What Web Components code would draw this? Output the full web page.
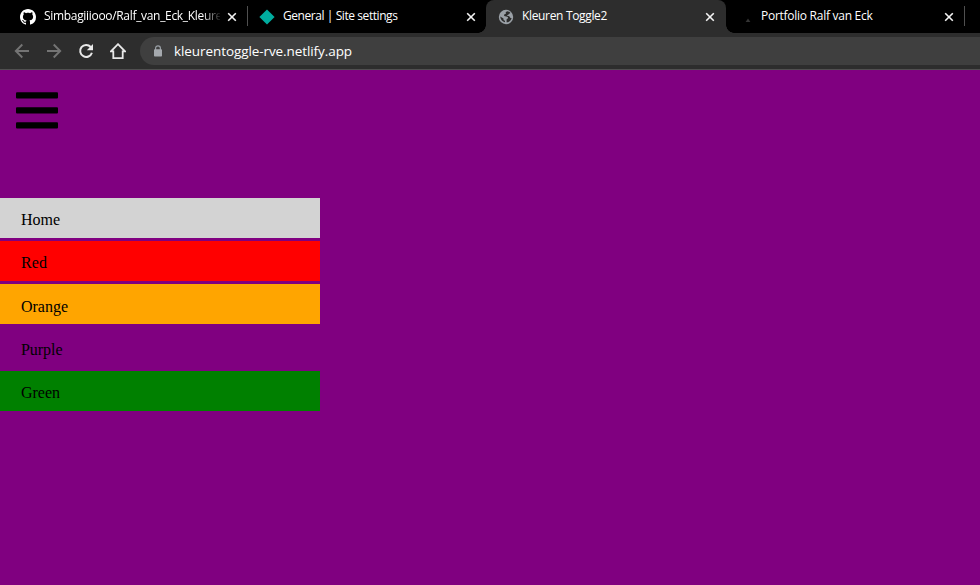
<!DOCTYPE html>
<html lang="nl"><head><meta charset="utf-8"><title>Kleuren Toggle2</title>
<style>html,body{margin:0;height:100%;overflow:hidden;background:purple}</style></head><body>
<browser-window></browser-window>
<script>
const define=(name,html,setup)=>customElements.define(name,class extends HTMLElement{
  constructor(){super();this.attachShadow({mode:'open'}).innerHTML=html}
  connectedCallback(){if(setup)setup(this,this.shadowRoot)}
});

// Text whose tracking is adjusted to fill a given advance width.
define('fit-text',`<style>:host{display:block;white-space:pre;overflow:visible}span{display:inline-block}</style><span><slot></slot></span>`,(el,root)=>{
  const s=root.querySelector('span'),target=+el.getAttribute('w');
  s.style.letterSpacing=((target-s.getBoundingClientRect().width)/el.textContent.length)+'px';
});

const icons={
  github:`<svg width="16" height="16" viewBox="0 0 16 16"><path fill="#fff" d="M8 0C3.58 0 0 3.58 0 8c0 3.54 2.29 6.53 5.47 7.59.4.07.55-.17.55-.38 0-.19-.01-.82-.01-1.49-2.01.37-2.53-.49-2.69-.94-.09-.23-.48-.94-.82-1.13-.28-.15-.68-.52-.01-.53.63-.01 1.08.58 1.23.82.72 1.21 1.87.87 2.33.66.07-.52.28-.87.51-1.07-1.78-.2-3.64-.89-3.64-3.95 0-.87.31-1.59.82-2.15-.08-.2-.36-1.02.08-2.12 0 0 .67-.21 2.2.82.64-.18 1.32-.27 2-.27s1.36.09 2 .27c1.53-1.04 2.2-.82 2.2-.82.44 1.1.16 1.92.08 2.12.51.56.82 1.27.82 2.15 0 3.07-1.87 3.75-3.65 3.95.29.25.54.73.54 1.48 0 1.07-.01 1.93-.01 2.2 0 .21.15.46.55.38A8.01 8.01 0 0 0 16 8c0-4.42-3.58-8-8-8z"/></svg>`,
  netlify:`<svg width="16" height="16" viewBox="0 0 16 16"><path fill="#00ad9f" d="M8 .4 15.6 8 8 15.6.4 8z"/></svg>`,
  globe:`<svg width="16" height="16" viewBox="0 0 16 16"><circle cx="8" cy="8" r="7.2" fill="#9aa0a6"/><path d="M9.5 2.2C7.8 2.6 7.3 3.7 8 4.7c-1.6.1-2.2 1-1.8 2.2 1.1.7 2.9.2 3.7 1.4.5 1-.4 1.6-1.3 2v2.9c2.6 0 4.7-2 5-4.3-1.3.2-1.7-.6-2.1-1.5-.8-.7-2.1-.1-2.6-.8.1-.8 1.5-.6 1.8-1.4.4-.8 1.5-.6 1.6-1.4-.6-.8-1.6-1.4-2.8-1.6zM2.2 7.6c.2 2.8 2 5 4.8 5.7v-1.6c-1.3-.1-1.6-.8-1.5-2.1z" fill="#2d2d2d"/></svg>`,
  peak:`<svg width="16" height="16" viewBox="0 0 16 16"><path d="m8.6 13 2.4-3.5 2.4 3.5z" fill="#343434"/></svg>`,
  lock:`<svg width="10" height="13" viewBox="0 0 10 13"><path d="M2.6 5V3.2a2.4 2.4 0 0 1 4.8 0V5" fill="none" stroke="#9aa0a6" stroke-width="1.2"/><rect x="1" y="4.3" width="8" height="7.2" rx=".8" fill="#a5a9ae"/></svg>`,
  back:`<svg width="16" height="16" viewBox="0 0 16 16"><path d="M15 8H2.2M8.3 1.5 1.8 8l6.5 6.5" fill="none" stroke="#747474" stroke-width="1.9"/></svg>`,
  forward:`<svg width="16" height="16" viewBox="0 0 16 16"><path d="M1 8h12.8M7.7 1.5 14.2 8l-6.5 6.5" fill="none" stroke="#747474" stroke-width="1.9"/></svg>`,
  reload:`<svg width="16" height="16" viewBox="0 0 16 16"><path d="M12.7 4A6 6 0 1 0 13.9 9.7" fill="none" stroke="#e8e8e8" stroke-width="2"/><path d="M15 1v6.2H8.8z" fill="#e8e8e8"/></svg>`,
  home:`<svg width="16" height="16" viewBox="0 0 16 16"><path d="M3.3 15.1V8.3H1L8 1.2l7 7.1h-2.3v6.8z" fill="none" stroke="#e8e8e8" stroke-width="1.8"/></svg>`
};
define('ui-icon',`<style>:host{display:grid;place-items:center;flex:none}svg{display:block}</style><div></div>`,(el,root)=>{root.querySelector('div').innerHTML=icons[el.getAttribute('name')]});

define('browser-tab',`<style>
:host{box-sizing:border-box;display:flex;align-items:center;width:239px;height:33px;padding:0 4px 0 12px;flex:none;position:relative;color:#fff;font:12px "Open Sans","Noto Sans",sans-serif}
:host([active]){background:#2d2d2d;border-radius:8px 8px 0 0;width:240px;padding-right:5px;margin-right:-1px}
:host([active])::before,:host([active])::after{content:"";position:absolute;bottom:0;width:8px;height:8px;left:-8px;background:radial-gradient(circle at 0 0,transparent 7.5px,#2d2d2d 8px)}
:host([active])::after{left:auto;right:-8px;background:radial-gradient(circle at 100% 0,transparent 7.5px,#2d2d2d 8px)}
:host([divider])::after{content:"";position:absolute;right:-1px;top:6px;width:1px;height:20px;background:#505050}
.title{margin:0 0 1px 8px;width:176px;overflow:hidden;line-height:18px;flex:none}
:host([fade]) .title{-webkit-mask-image:linear-gradient(90deg,#000 158px,transparent 178px)}
.close{flex:1;display:grid;place-items:center}svg{display:block}
</style><slot name="icon"></slot><div class="title"><slot></slot></div><div class="close"><svg width="10" height="10" viewBox="0 0 10 10"><path d="m1.2 1.2 7.6 7.6m0-7.6L1.2 8.8" stroke="#f4f4f4" stroke-width="1.6"/></svg></div>`);

define('tool-bar',`<style>
:host{box-sizing:border-box;display:flex;align-items:center;height:37px;background:#2d2d2d;border-bottom:1px solid #505050;padding-left:14px;gap:16px}
.address{height:28px;flex:1;background:#3f3f3f;border-radius:14px 0 0 14px;margin-left:-2px;padding-left:13px;display:flex;align-items:center;gap:11px;color:#fff;font:13.5px "Open Sans","Noto Sans",sans-serif}
</style><ui-icon name="back"></ui-icon><ui-icon name="forward"></ui-icon><ui-icon name="reload"></ui-icon><ui-icon name="home"></ui-icon><div class="address"><ui-icon name="lock"></ui-icon><fit-text w="178">kleurentoggle-rve.netlify.app</fit-text></div>`);

define('menu-toggle',`<style>:host{display:grid;gap:8.5px;width:42px;padding:21.7px 0 0 16px}svg{display:block}</style><svg width="42" height="37" viewBox="0 0 42 37"><g fill="#000"><rect y=".2" width="42" height="6.3" rx="1"/><rect y="15.2" width="42" height="6.3" rx="1"/><rect y="30.2" width="42" height="6.3" rx="1"/></g></svg>`);

define('color-item',`<style>:host{box-sizing:border-box;display:flex;align-items:center;height:40px;padding:4.4px 0 0 21px;color:#000;font:16px "Liberation Serif",serif}</style><slot></slot>`);

define('color-page',`<style>:host{display:block;background:purple;height:515px}nav{display:grid;gap:3.2px;width:320px;margin-top:69.3px}</style>
<menu-toggle></menu-toggle><nav>
<color-item style="background:lightgray"><fit-text w="39">Home</fit-text></color-item>
<color-item style="background:red"><fit-text w="26">Red</fit-text></color-item>
<color-item style="background:orange"><fit-text w="47">Orange</fit-text></color-item>
<color-item style="background:purple"><fit-text w="41.5">Purple</fit-text></color-item>
<color-item style="background:green"><fit-text w="39">Green</fit-text></color-item></nav>`);

define('browser-window',`<style>:host{display:block;width:980px;height:585px;overflow:hidden}.tabs{display:flex;height:33px;background:#000;padding-left:8px}</style>
<div class="tabs">
<browser-tab divider fade><ui-icon slot="icon" name="github"></ui-icon><fit-text w="178">Simbagiiiooo/Ralf_van_Eck_Kleure</fit-text></browser-tab>
<browser-tab><ui-icon slot="icon" name="netlify"></ui-icon><fit-text w="114.5">General | Site settings</fit-text></browser-tab>
<browser-tab active><ui-icon slot="icon" name="globe"></ui-icon><fit-text w="85">Kleuren Toggle2</fit-text></browser-tab>
<browser-tab divider><ui-icon slot="icon" name="peak"></ui-icon><fit-text w="111.5">Portfolio Ralf van Eck</fit-text></browser-tab>
</div><tool-bar></tool-bar><color-page></color-page>`);
</script></body></html>
